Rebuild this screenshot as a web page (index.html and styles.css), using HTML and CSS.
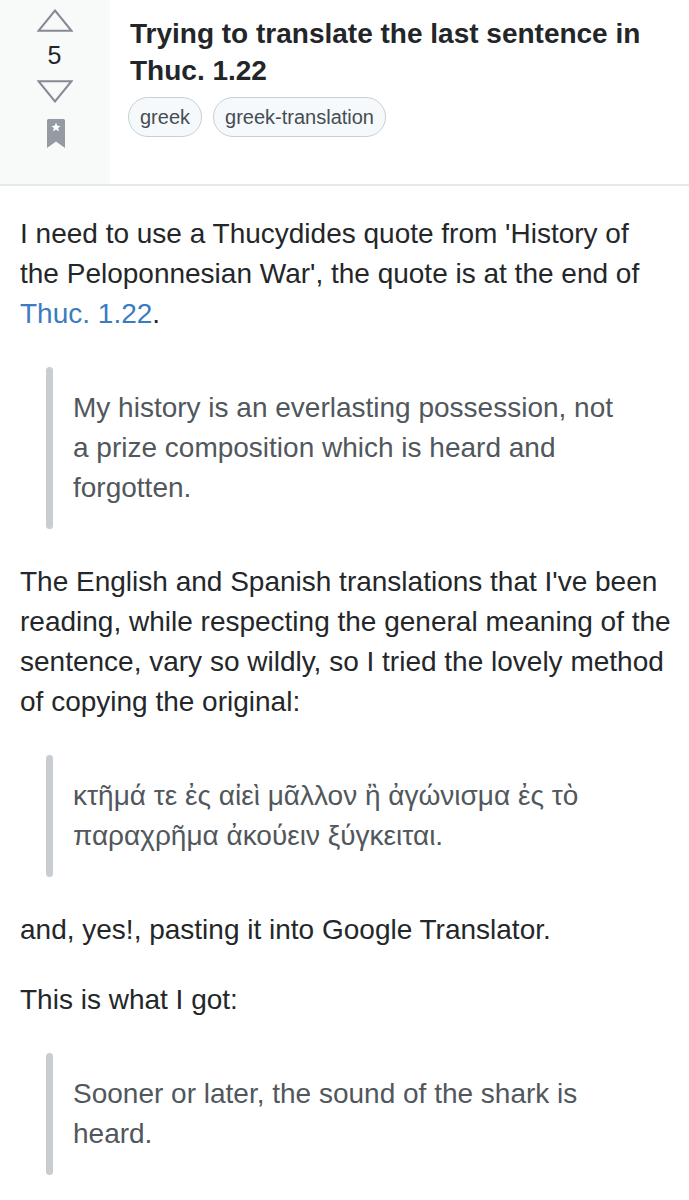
FILE: index.html
```html
<!DOCTYPE html>
<html lang="en">
<head>
<meta charset="utf-8">
<title>Trying to translate the last sentence in Thuc. 1.22</title>
<link rel="stylesheet" href="styles.css">
</head>
<body>
<header class="q-head">
  <div class="votes">
    <svg class="arrow up" width="36" height="23" viewBox="0 0 36 23" aria-label="Up vote"><polygon points="18,1.5 34.5,21.8 1.5,21.8" fill="none" stroke="#848b92" stroke-width="2" stroke-linejoin="miter"/></svg>
    <span class="count">5</span>
    <svg class="arrow down" width="36" height="23" viewBox="0 0 36 23" aria-label="Down vote"><polygon points="1.5,1.2 34.5,1.2 18,21.5" fill="none" stroke="#848b92" stroke-width="2" stroke-linejoin="miter"/></svg>
    <svg class="bookmark" width="18" height="29" viewBox="0 0 18 29" aria-label="Bookmark"><path d="M0 1.5 Q0 0 1.5 0 H16.5 Q18 0 18 1.5 V29 L9 22.5 L0 29 Z" fill="#949ba2"/><polygon points="9,3.6 10.3,6.8 13.6,7 11.1,9.1 11.9,12.4 9,10.6 6.1,12.4 6.9,9.1 4.4,7 7.7,6.8" fill="#ffffff"/></svg>
  </div>
  <div class="q-main">
    <h1 class="q-title">Trying to translate the last sentence in Thuc. 1.22</h1>
    <div class="tags">
      <span class="tag">greek</span>
      <span class="tag">greek-translation</span>
    </div>
  </div>
</header>
<article class="post">
  <p>I need to use a Thucydides quote from 'History of the Peloponnesian War', the quote is at the end of <a class="link" href="#">Thuc.&nbsp;1.22</a>.</p>
  <blockquote class="quote"><p>My history is an everlasting possession, not a prize composition which is heard and forgotten.</p></blockquote>
  <p>The English and Spanish translations that I've been reading, while respecting the general meaning of the sentence, vary so wildly, so I tried the lovely method of copying the original:</p>
  <blockquote class="quote"><p>κτῆμά τε ἐς αἰεὶ μᾶλλον ἢ ἀγώνισμα ἐς τὸ παραχρῆμα ἀκούειν ξύγκειται.</p></blockquote>
  <p>and, yes!, pasting it into Google Translator.</p>
  <p class="tight">This is what I got:</p>
  <blockquote class="quote"><p>Sooner or later, the sound of the shark is heard.</p></blockquote>
</article>
</body>
</html>
```
FILE: styles.css
```css
* { box-sizing: border-box; }

html, body {
  margin: 0;
  padding: 0;
  background: #ffffff;
}

body {
  font-family: "Liberation Sans", Arial, "DejaVu Sans", sans-serif;
  color: #242729;
  width: 689px;
}

.q-head {
  display: flex;
  height: 186px;
  border-bottom: 2px solid #e6e8ea;
}

.votes {
  width: 110px;
  flex-shrink: 0;
  background: #f8f9f9;
  display: flex;
  flex-direction: column;
  align-items: center;
  padding-top: 9px;
}

.arrow { display: block; }

.count {
  display: block;
  font-size: 25px;
  line-height: 46px;
  height: 46px;
  color: #232629;
  padding-right: 1px;
}

.arrow.down { margin-top: 2px; }

.bookmark {
  display: block;
  margin-top: 16px;
  margin-left: 1px;
}

.q-main {
  flex: 1;
  padding: 15px 16px 0 20px;
}

.q-title {
  margin: 0;
  font-size: 28px;
  line-height: 37px;
  font-weight: 700;
  color: #232629;
}

.tags {
  display: flex;
  gap: 11px;
  margin-top: 8px;
  margin-left: -2px;
}

.tag {
  display: inline-block;
  height: 40px;
  line-height: 38px;
  padding: 0 11px;
  border: 1px solid #c5d0d6;
  border-radius: 20px;
  background: #f5f9fb;
  color: #454d54;
  font-size: 20px;
}

.post {
  display: flex;
  flex-direction: column;
  gap: 33px;
  padding: 28px 16px 40px 20px;
  font-size: 28px;
  line-height: 40px;
}

.post p { margin: 0; }

.post p.tight { margin-top: -3px; }

.link {
  color: #3b7bbf;
  text-decoration: none;
}

.quote {
  display: flex;
  margin: 0 41px 0 26px;
  padding: 0;
  color: #51575c;
}

.quote::before {
  content: "";
  flex: 0 0 7px;
  border-radius: 4px;
  background: #c9ccd0;
  margin-right: 20px;
}

.quote p {
  padding: 21px 0;
}
```
